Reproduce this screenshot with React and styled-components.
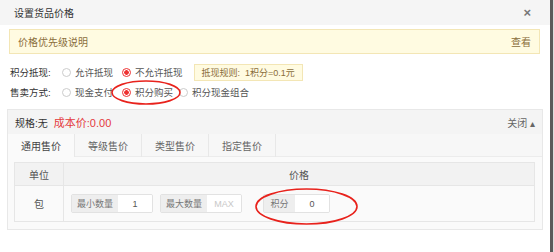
import React from "react";
import styled, { createGlobalStyle } from "styled-components";

const GlobalStyle = createGlobalStyle`
  html, body { margin: 0; padding: 0; background: #fff; }
  body {
    font-family: "Liberation Sans", "Noto Sans CJK SC", sans-serif;
    font-size: 10px;
    color: #555;
  }
`;

const Page = styled.div`
  display: flex;
  width: 554px;
  height: 252px;
  overflow: hidden;
`;

const Modal = styled.div`
  position: relative;
  width: 550px;
  height: 252px;
  background: #fff;
`;

const Edge = styled.div`
  width: 3px;
  background: #5a5a5a;
  border-right: 1px solid #ddd;
`;

const Header = styled.div`
  display: flex;
  align-items: center;
  justify-content: space-between;
  height: 25px;
  padding: 0 19px 0 14px;
  background: #f5f5f5;
  color: #333;
  font-size: 10px;
`;

const Close = styled.span`
  color: #777;
  font-size: 13px;
  font-weight: bold;
`;

const Content = styled.div`
  padding: 4px 7px 0 7px;
`;

const Notice = styled.div`
  display: flex;
  align-items: center;
  justify-content: space-between;
  height: 23px;
  margin: 0 3px 0 2px;
  padding: 0 8px 0 8px;
  background: #fffbe1;
  border: 1px solid #f3e6b5;
  color: #8a6d3b;
  font-size: 10px;
`;

const FormRows = styled.div`
  display: flex;
  flex-direction: column;
  gap: 2px;
  padding: 9px 0 8px 3px;
`;

const Row = styled.div`
  display: flex;
  align-items: center;
  height: 18px;
  white-space: nowrap;
  font-size: 9.5px;
`;

const Label = styled.span`
  flex: none;
  width: 52px;
  color: #333;
`;

const Option = styled.label`
  display: flex;
  align-items: center;
  gap: 4px;
  margin-right: ${(p) => p.$gap || 9}px;
  color: #555;
`;

const Radio = styled.span`
  box-sizing: border-box;
  width: 9px;
  height: 9px;
  border-radius: 50%;
  border: 1px solid ${(p) => (p.$on ? "#e33" : "#ccc")};
  background: ${(p) => (p.$on ? "radial-gradient(circle, #e33 0 2px, #fff 2.6px)" : "#fff")};
`;

const Tag = styled.span`
  display: flex;
  align-items: center;
  height: 15px;
  margin-left: 2px;
  padding: 0 7px;
  background: #fffbe1;
  border: 1px solid #f3e6b5;
  color: #8a6d3b;
  font-size: 9px;
`;

const Panel = styled.div`
  border: 1px solid #e8e8e8;
  background: #fafafa;
`;

const PanelHead = styled.div`
  display: flex;
  align-items: center;
  height: 24px;
  padding: 0 7px;
  background: #f4f4f4;
  color: #333;
`;

const Cost = styled.span`
  margin-left: 6px;
  color: #e4393c;
  font-size: 11px;
`;

const Toggle = styled.span`
  margin-left: auto;
  color: #666;
`;

const Tabs = styled.div`
  display: flex;
  height: 22px;
  background: #f7f7f7;
  border-bottom: 1px solid #ececec;
`;

const Tab = styled.div`
  display: flex;
  align-items: center;
  justify-content: center;
  width: 66px;
  margin-bottom: -1px;
  border-right: 1px solid #e8e8e8;
  background: ${(p) => (p.$active ? "#fafafa" : "transparent")};
  color: ${(p) => (p.$active ? "#444" : "#666")};
`;

const PanelBody = styled.div`
  padding: 5px 7px 7px 6px;
`;

const Table = styled.div`
  border: 1px solid #e6e6e6;
`;

const HeadRow = styled.div`
  display: flex;
  height: 22px;
  background: #f2f2f2;
  border-bottom: 1px solid #e6e6e6;
  color: #555;
`;

const BodyRow = styled.div`
  display: flex;
  height: 35px;
  background: #fafafa;
`;

const Cell = styled.div`
  display: flex;
  align-items: center;
  justify-content: ${(p) => (p.$left ? "flex-start" : "center")};
  gap: 7px;
  width: ${(p) => (p.$w ? `${p.$w}px` : "auto")};
  flex: ${(p) => (p.$w ? "none" : 1)};
  padding-left: ${(p) => (p.$left ? "7px" : 0)};
  border-right: ${(p) => (p.$w ? "1px solid #e6e6e6" : "none")};
`;

const Group = styled.div`
  display: flex;
  height: 17px;
  margin-left: ${(p) => p.$offset || 0}px;
  border: 1px solid #e2e2e2;
  border-radius: 2px;
  overflow: hidden;
  font-size: 9px;
`;

const Addon = styled.span`
  display: flex;
  align-items: center;
  justify-content: center;
  width: ${(p) => p.$w || 46}px;
  background: #eee;
  color: #777;
`;

const Value = styled.span`
  display: flex;
  align-items: center;
  justify-content: center;
  width: 34px;
  background: #fff;
  color: ${(p) => (p.$ph ? "#c8c8c8" : "#555")};
  font-size: 9px;
`;

const Ring = styled.svg`
  position: absolute;
  pointer-events: none;
`;

const Ellipse = ({ x, y, w, h }) => (
  <Ring style={{ left: x, top: y }} width={w} height={h} viewBox={`0 0 ${w} ${h}`}>
    <ellipse cx={w / 2} cy={h / 2} rx={w / 2 - 1} ry={h / 2 - 1} fill="none" stroke="#e8221c" strokeWidth="1.6" />
  </Ring>
);

export default function App() {
  const tabs = ["通用售价", "等级售价", "类型售价", "指定售价"];
  return (
    <>
      <GlobalStyle />
      <Page>
        <Modal>
          <Header>
            <span>设置货品价格</span>
            <Close>×</Close>
          </Header>
          <Content>
            <Notice>
              <span>价格优先级说明</span>
              <span>查看</span>
            </Notice>
            <FormRows>
              <Row>
                <Label>积分抵现:</Label>
                <Option>
                  <Radio />
                  允许抵现
                </Option>
                <Option $gap={9}>
                  <Radio $on />
                  不允许抵现
                </Option>
                <Tag>抵现规则:&nbsp;&nbsp;1积分=0.1元</Tag>
              </Row>
              <Row>
                <Label>售卖方式:</Label>
                <Option $gap={9}>
                  <Radio />
                  现金支付
                </Option>
                <Option $gap={6}>
                  <Radio $on />
                  积分购买
                </Option>
                <Option>
                  <Radio />
                  积分现金组合
                </Option>
              </Row>
            </FormRows>
            <Panel>
              <PanelHead>
                <span>规格:无</span>
                <Cost>成本价:0.00</Cost>
                <Toggle>关闭 ▴</Toggle>
              </PanelHead>
              <Tabs>
                {tabs.map((t, i) => (
                  <Tab key={t} $active={i === 0}>
                    {t}
                  </Tab>
                ))}
              </Tabs>
              <PanelBody>
                <Table>
                  <HeadRow>
                    <Cell $w={48}>单位</Cell>
                    <Cell>价格</Cell>
                  </HeadRow>
                  <BodyRow>
                    <Cell $w={48}>包</Cell>
                    <Cell $left>
                      <Group>
                        <Addon>最小数量</Addon>
                        <Value>1</Value>
                      </Group>
                      <Group>
                        <Addon>最大数量</Addon>
                        <Value $ph>MAX</Value>
                      </Group>
                      <Group $offset={14}>
                        <Addon $w={31}>积分</Addon>
                        <Value>0</Value>
                      </Group>
                    </Cell>
                  </BodyRow>
                </Table>
              </PanelBody>
            </Panel>
          </Content>
          <Ellipse x={111} y={80} w={70} h={25} />
          <Ellipse x={255} y={188} w={103} h={37} />
        </Modal>
        <Edge />
      </Page>
    </>
  );
}
